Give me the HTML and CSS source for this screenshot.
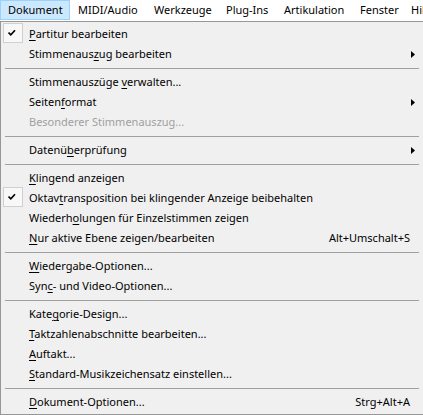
FILE: index.html
```html
<!DOCTYPE html>
<html lang="de">
<head>
<meta charset="utf-8">
<link rel="stylesheet" href="styles.css">
</head>
<body>
<div class="menubar">
  <div class="mb-item mb-active w1">Dokument</div>
  <div class="mb-item w2">MIDI/Audio</div>
  <div class="mb-item w3">Werkzeuge</div>
  <div class="mb-item w4">Plug-Ins</div>
  <div class="mb-item w5">Artikulation</div>
  <div class="mb-item w6">Fenster</div>
  <div class="mb-item w7">Hilfe</div>
</div>
<div class="dropdown">
  <div class="item"><span class="check"><svg width="8" height="8" viewBox="0 0 8 8"><path d="M0.5 3.5 L2.8 5.8 L7 1.2" fill="none" stroke="#000" stroke-width="1.7"/></svg></span><span class="label"><u>P</u>artitur bearbeiten</span><span class="sc"></span><span class="arr"></span></div>
  <div class="item"><span class="nocheck"></span><span class="label">Stimmenaus<u>z</u>ug bearbeiten</span><span class="sc"></span><span class="arr"><svg width="4" height="7" viewBox="0 0 4 7"><polygon points="0,0 4,3.5 0,7" fill="#000"/></svg></span></div>
  <div class="sep"></div>
  <div class="item"><span class="nocheck"></span><span class="label">Stimmenauszüge <u>v</u>erwalten...</span><span class="sc"></span><span class="arr"></span></div>
  <div class="item"><span class="nocheck"></span><span class="label">Seiten<u>f</u>ormat</span><span class="sc"></span><span class="arr"><svg width="4" height="7" viewBox="0 0 4 7"><polygon points="0,0 4,3.5 0,7" fill="#000"/></svg></span></div>
  <div class="item disabled"><span class="nocheck"></span><span class="label">Besonderer Stimmenauszug...</span><span class="sc"></span><span class="arr"></span></div>
  <div class="sep"></div>
  <div class="item"><span class="nocheck"></span><span class="label">Datenü<u>b</u>erprüfung</span><span class="sc"></span><span class="arr"><svg width="4" height="7" viewBox="0 0 4 7"><polygon points="0,0 4,3.5 0,7" fill="#000"/></svg></span></div>
  <div class="sep"></div>
  <div class="item"><span class="nocheck"></span><span class="label"><u>K</u>lingend anzeigen</span><span class="sc"></span><span class="arr"></span></div>
  <div class="item"><span class="check"><svg width="8" height="8" viewBox="0 0 8 8"><path d="M0.5 3.5 L2.8 5.8 L7 1.2" fill="none" stroke="#000" stroke-width="1.7"/></svg></span><span class="label">Oktav<u>t</u>ransposition bei klingender Anzeige beibehalten</span><span class="sc"></span><span class="arr"></span></div>
  <div class="item"><span class="nocheck"></span><span class="label">Wiederh<u>o</u>lungen für Einzelstimmen zeigen</span><span class="sc"></span><span class="arr"></span></div>
  <div class="item"><span class="nocheck"></span><span class="label"><u>N</u>ur aktive Ebene zeigen/bearbeiten</span><span class="sc">Alt+Umschalt+S</span><span class="arr"></span></div>
  <div class="sep"></div>
  <div class="item"><span class="nocheck"></span><span class="label"><u>W</u>iedergabe-Optionen...</span><span class="sc"></span><span class="arr"></span></div>
  <div class="item"><span class="nocheck"></span><span class="label">Syn<u>c</u>- und Video-Optionen...</span><span class="sc"></span><span class="arr"></span></div>
  <div class="sep"></div>
  <div class="item"><span class="nocheck"></span><span class="label">Kate<u>g</u>orie-Design...</span><span class="sc"></span><span class="arr"></span></div>
  <div class="item"><span class="nocheck"></span><span class="label"><u>T</u>aktzahlenabschnitte bearbeiten...</span><span class="sc"></span><span class="arr"></span></div>
  <div class="item"><span class="nocheck"></span><span class="label"><u>A</u>uftakt...</span><span class="sc"></span><span class="arr"></span></div>
  <div class="item"><span class="nocheck"></span><span class="label"><u>S</u>tandard-Musikzeichensatz einstellen...</span><span class="sc"></span><span class="arr"></span></div>
  <div class="sep"></div>
  <div class="item"><span class="nocheck"></span><span class="label"><u>D</u>okument-Optionen...</span><span class="sc">Strg+Alt+A</span><span class="arr"></span></div>
</div>
</body>
</html>
```
FILE: styles.css
```css
html, body {
  margin: 0;
  padding: 0;
  background: #ffffff;
  overflow: hidden;
}
body {
  width: 423px;
  height: 415px;
  font-family: "Noto Sans", "Open Sans", sans-serif;
  font-size: 11px;
  color: #000;
}
.menubar {
  display: flex;
  height: 21px;
  background: #ffffff;
  white-space: nowrap;
  overflow: hidden;
}
.mb-item {
  box-sizing: border-box;
  height: 20px;
  line-height: 18px;
  padding-left: 7px;
  border: 1px solid transparent;
  flex: none;
}
.mb-active {
  background: #cce8ff;
  border-color: #99d1ff;
}
.w1 { width: 70px; }
.w2 { width: 76px; }
.w3 { width: 72px; }
.w4 { width: 58px; }
.w5 { width: 76px; }
.w6 { width: 51px; }
.w7 { width: 40px; }

.dropdown {
  box-sizing: border-box;
  width: 426px;
  background: #f0f0f0;
  border: 1px solid #979797;
  padding: 2px;
}
.item {
  display: grid;
  grid-template-columns: 26px 1fr auto 13px;
  align-items: center;
  height: 20px;
  white-space: nowrap;
}
.item.disabled {
  color: #a0a0a0;
}
.check {
  box-sizing: border-box;
  width: 20px;
  height: 20px;
  margin-top: -2px;
  border: 1px solid #d0d0d0;
  background: #f8f8f8;
  display: flex;
  align-items: center;
  justify-content: center;
}
.check svg {
  display: block;
  margin-left: -2px;
}
.nocheck {
  width: 20px;
  height: 20px;
}
.label {
  line-height: 20px;
}
.label u {
  text-decoration-thickness: 1px;
  text-underline-offset: 2px;
}
.sc {
  line-height: 20px;
}
.arr {
  display: flex;
  align-items: center;
  padding-left: 1px;
}
.arr svg {
  display: block;
}
.sep {
  height: 8px;
  margin: 0 4px 0 2px;
  box-sizing: border-box;
  border-top: 4px solid transparent;
}
.sep::before {
  content: "";
  display: block;
  height: 1px;
  background: #a0a0a0;
}
```
